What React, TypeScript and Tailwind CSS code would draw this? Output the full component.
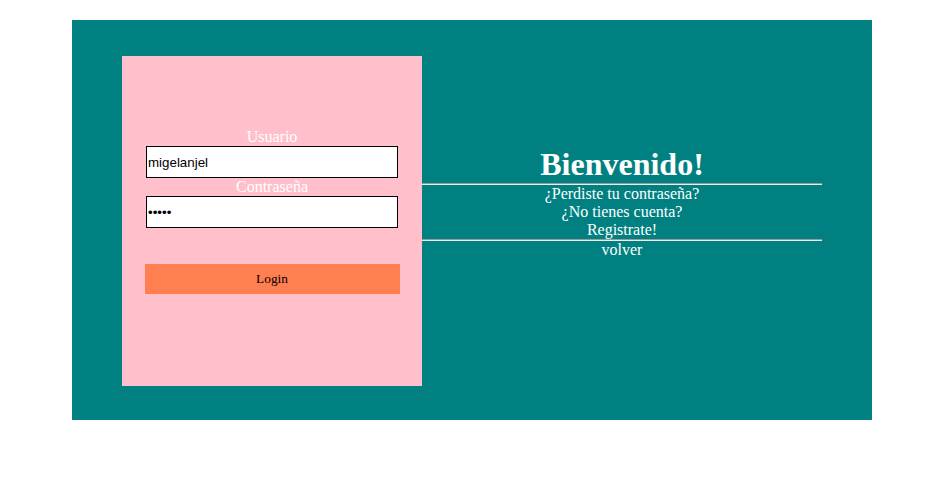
export default function App() {
  return (
    <div className="min-h-[485px] bg-white pt-[20px] pl-[72px] font-['Liberation_Serif',serif]">
      <div className="flex w-[800px] h-[400px] bg-[#008080] pt-[36px] pl-[50px]">
        <LoginPanel />
        <Welcome />
      </div>
    </div>
  );
}

function LoginPanel() {
  return (
    <div className="flex flex-col items-center w-[300px] h-[330px] bg-[#ffc0cb] pt-[72px]">
      <label className="text-white text-[16px] leading-[18px]">Usuario</label>
      <input
        readOnly
        value="migelanjel"
        className="w-[252px] h-[32px] border border-black bg-white pl-[1px] text-[13.33px] text-black font-['Liberation_Sans',sans-serif] outline-none"
      />
      <label className="text-white text-[16px] leading-[18px]">Contraseña</label>
      <input
        readOnly
        type="password"
        value="12345"
        className="w-[252px] h-[32px] border border-black bg-white pl-[1px] text-[13.33px] text-black font-['Liberation_Sans',sans-serif] outline-none"
      />
      <button className="mt-[36px] w-[255px] h-[30px] bg-[#ff7f50] text-[13.33px] text-black">
        Login
      </button>
    </div>
  );
}

function Welcome() {
  return (
    <div className="flex flex-col w-[400px] pt-[90px] text-white text-center">
      <h1 className="text-[32px] font-bold leading-[37px]">Bienvenido!</h1>
      <hr className="border-t border-b border-t-[#9a9a9a] border-b-[#eeeeee]" />
      <p className="text-[16px] leading-[18px]">¿Perdiste tu contraseña?</p>
      <p className="text-[16px] leading-[18px]">¿No tienes cuenta?</p>
      <p className="text-[16px] leading-[18px]">Registrate!</p>
      <hr className="border-t border-b border-t-[#9a9a9a] border-b-[#eeeeee]" />
      <p className="text-[16px] leading-[18px]">volver</p>
    </div>
  );
}
